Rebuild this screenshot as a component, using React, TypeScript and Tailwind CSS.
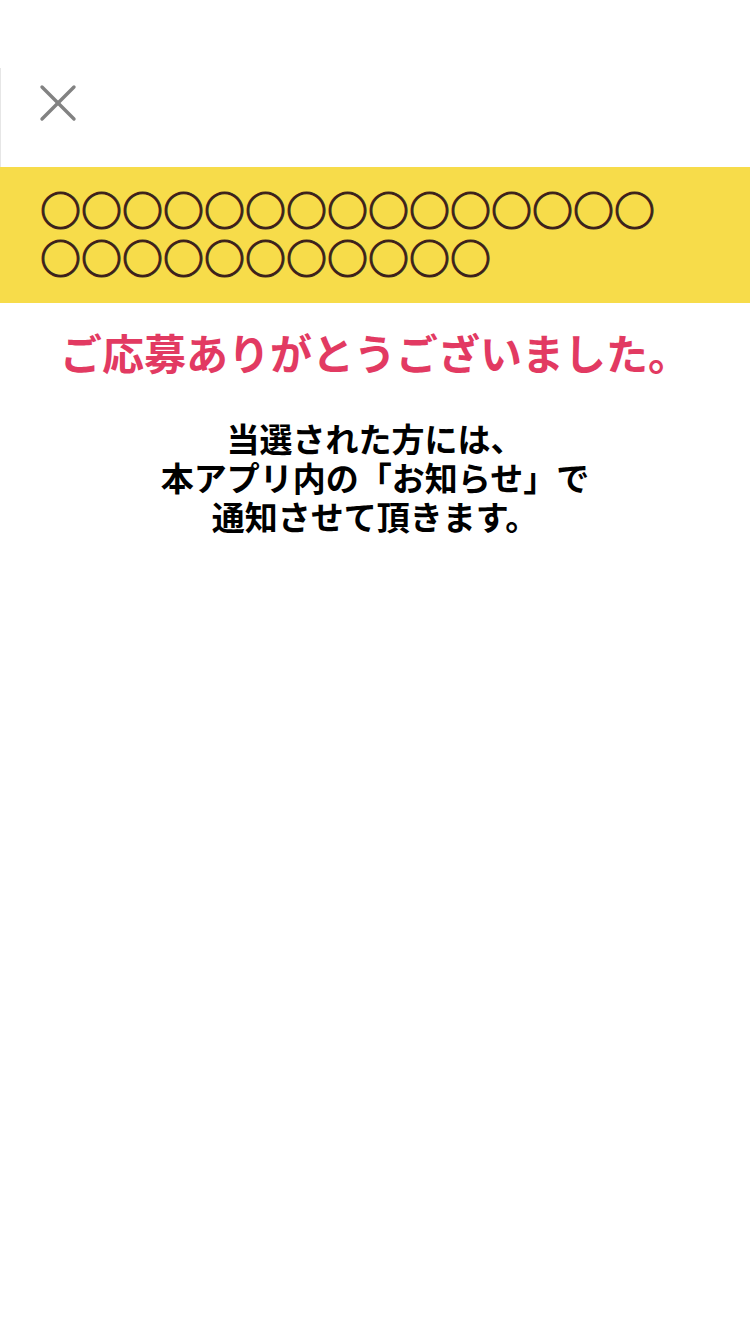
export default function App() {
  return (
    <div
      className="min-h-screen w-full bg-white"
      style={{ fontFamily: '"Noto Sans CJK JP", "Noto Sans", sans-serif' }}
    >
      <header className="h-[167px] pt-[68px]">
        <div className="flex h-[99px] items-start border-l border-[#e6e6e6] pt-[16px]">
          <button type="button" aria-label="閉じる" className="ml-[38px] grid h-[38px] w-[38px] place-items-center text-[#828282]">
            <svg width="38" height="38" viewBox="0 0 38 38" fill="none" stroke="currentColor" strokeWidth="3.4" strokeLinecap="round">
              <path d="M3 3 35 35" />
              <path d="M35 3 3 35" />
            </svg>
          </button>
        </div>
      </header>

      <section className="bg-[#f7dc4a] pl-[40px] pr-[60px] pt-[17px] pb-[23px]">
        <p className="break-all text-[41px] font-bold leading-[48px] text-[#3b1f1b] [-webkit-text-stroke:1px_#3b1f1b]">
          ○○○○○○○○○○○○○○○○○○○○○○○○○○
        </p>
      </section>

      <main className="flex flex-col items-center">
        <h1 className="mt-[20px] text-[42px] font-bold leading-[58px] text-[#e23a62]">
          ご応募ありがとうございました。
        </h1>
        <p className="mt-[38px] text-center text-[33px] font-bold leading-[39px] text-black">
          当選された方には、
          <br />
          本アプリ内の「お知らせ」で
          <br />
          通知させて頂きます。
        </p>
      </main>
    </div>
  );
}
